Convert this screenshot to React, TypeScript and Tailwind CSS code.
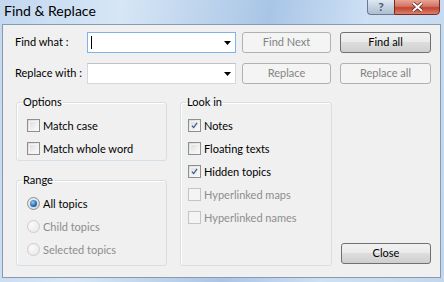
import type { ReactNode } from "react";

const font = "font-['Lato','Noto_Sans',sans-serif]";

function Checkbox({ checked = false, disabled = false, label }: { checked?: boolean; disabled?: boolean; label: string }) {
  return (
    <div className="flex items-center h-[13px]">
      <div
        className={`w-[13px] h-[13px] border flex items-center justify-center ${
          disabled ? "border-[#c4c4c4] bg-[#f4f4f4]" : "border-[#8e8f8f] bg-[linear-gradient(135deg,#d8d8d8,#f4f4f4_70%,#fafafa)]"
        }`}
      >
        <div className={`w-[9px] h-[9px] ${disabled ? "" : "border border-[#f4f4f4]"} flex items-center justify-center`}>
          {checked && (
            <svg width="9" height="9" viewBox="0 0 9 9">
              <path d="M1.2 4.6 L3.4 7.2 L7.8 1" fill="none" stroke="#3b5596" strokeWidth="1.6" />
            </svg>
          )}
        </div>
      </div>
      <span className={`ml-[3px] leading-[13px] whitespace-nowrap ${disabled ? "text-[#8d8d8d]" : "text-black"}`}>{label}</span>
    </div>
  );
}

function Radio({ checked = false, disabled = false, label }: { checked?: boolean; disabled?: boolean; label: string }) {
  return (
    <div className="flex items-center h-[13px]">
      <div
        className={`w-[13px] h-[13px] rounded-full border flex items-center justify-center ${
          disabled ? "border-[#cdcdcd] bg-[radial-gradient(circle_at_35%_35%,#fafafa,#e6e6e6)]" : "border-[#8e8f8f] bg-[radial-gradient(circle_at_35%_35%,#f4f4f4,#d0d0d0)]"
        }`}
      >
        {checked && (
          <div className="w-[7px] h-[7px] rounded-full bg-[radial-gradient(circle_at_40%_35%,#8ed0f5,#1d6ab4_60%,#0d3f80)]" />
        )}
      </div>
      <span className={`ml-[3px] leading-[13px] whitespace-nowrap ${disabled ? "text-[#8d8d8d]" : "text-black"}`}>{label}</span>
    </div>
  );
}

function Button({ children, disabled = false, w }: { children: ReactNode; disabled?: boolean; w: string }) {
  return (
    <div
      className={`${w} h-[21px] rounded-[3px] border flex items-center justify-center whitespace-nowrap ${
        disabled
          ? "border-[#adb2b5] bg-[#f4f4f4] text-[#838383]"
          : "border-[#707070] bg-[linear-gradient(#f2f2f2,#ebebeb_45%,#dddddd_50%,#cfcfcf)] text-black"
      }`}
    >
      {children}
    </div>
  );
}

function Combo({ focused = false }: { focused?: boolean }) {
  return (
    <div
      className={`w-[149px] h-[21px] border bg-white flex items-center pl-[3px] pr-[4px] ${
        focused ? "border-[#7eb4ea]" : "border-[#d6d8dc] border-t-[#bfc3c8]"
      }`}
    >
      <div className="flex-1">{focused && <div className="w-px h-[13px] bg-black" />}</div>
      <svg width="7" height="4" viewBox="0 0 7 4">
        <path d="M0 0 H7 L3.5 4 Z" fill="#000" />
      </svg>
    </div>
  );
}

function Group({ title, className, pad, children }: { title: string; className: string; pad: string; children: ReactNode }) {
  return (
    <fieldset className={`border border-[#d5dfe5] rounded-[3px] shadow-[inset_1px_1px_0_#fff] ${className}`}>
      <legend className="ml-[5px] px-[1px] leading-[14px] text-black">{title}</legend>
      <div className={`${pad} pt-[10px] flex flex-col gap-[10px]`}>{children}</div>
    </fieldset>
  );
}

export default function App() {
  return (
    <div
      className={`${font} text-[11px] w-[444px] h-[282px] overflow-hidden flex flex-col bg-[linear-gradient(100deg,#c3d8ef,#d6e6f6_25%,#b8d0eb_45%,#a9c5e6_55%,#cde0f4_75%,#c2d7ee)]`}
    >
      {/* title bar */}
      <div className="h-[24px] flex items-start">
        <div className="pl-[4px] pt-[2px] text-[14px] leading-[18px] text-black flex-1">Find &amp; Replace</div>
        <div className="flex mr-[4px] -mt-px">
          <div className="w-[27px] h-[16px] rounded-bl-[4px] border border-[#6d7a8d] border-r-0 bg-[linear-gradient(#dfe8f2,#c3d1e0_50%,#aebfd3)] flex items-center justify-center text-[#4b5668] text-[12px] font-bold leading-none">
            ?
          </div>
          <div className="w-[46px] h-[16px] rounded-br-[4px] border border-[#7a2a22] bg-[linear-gradient(#e8a494,#d47465_45%,#c2432f_55%,#d8826e)] flex items-center justify-center">
            <svg width="13" height="10" viewBox="0 0 13 10">
              <path d="M2 1 L11 9 M11 1 L2 9" stroke="#5a1e18" strokeWidth="3.4" />
              <path d="M2 1 L11 9 M11 1 L2 9" stroke="#fff" strokeWidth="2" />
            </svg>
          </div>
        </div>
      </div>

      {/* client */}
      <div className="ml-[2px] w-[439px] h-[254px] border border-[#8a9aae] bg-[#f0f0f0] pt-[7px] pl-[12px]">
        <div className="flex items-center h-[21px]">
          <div className="w-[72px] whitespace-nowrap">Find what :</div>
          <Combo focused />
          <div className="ml-[6px]">
            <Button disabled w="w-[89px]">Find Next</Button>
          </div>
          <div className="ml-[9px]">
            <Button w="w-[91px]">Find all</Button>
          </div>
        </div>
        <div className="flex items-center h-[21px] mt-[10px]">
          <div className="w-[72px] whitespace-nowrap">Replace with :</div>
          <Combo />
          <div className="ml-[6px]">
            <Button disabled w="w-[89px]">Replace</Button>
          </div>
          <div className="ml-[9px]">
            <Button disabled w="w-[91px]">Replace all</Button>
          </div>
        </div>

        <div className="flex mt-[11px] ml-[1px] h-[171px]">
          <div className="w-[151px] flex flex-col">
            <Group title="Options" className="h-[66px]" pad="pl-[10px]">
              <Checkbox label="Match case" />
              <Checkbox label="Match whole word" />
            </Group>
            <Group title="Range" className="h-[93px] mt-[12px]" pad="pl-[10px]">
              <Radio checked label="All topics" />
              <Radio disabled label="Child topics" />
              <Radio disabled label="Selected topics" />
            </Group>
          </div>
          <Group title="Look in" className="w-[152px] h-[171px] ml-[13px]" pad="pl-[7px]">
            <Checkbox checked label="Notes" />
            <Checkbox label="Floating texts" />
            <Checkbox checked label="Hidden topics" />
            <Checkbox disabled label="Hyperlinked maps" />
            <Checkbox disabled label="Hyperlinked names" />
          </Group>
          <div className="ml-[9px] flex flex-col justify-end pb-[2px]">
            <Button w="w-[90px]">Close</Button>
          </div>
        </div>
      </div>
    </div>
  );
}
